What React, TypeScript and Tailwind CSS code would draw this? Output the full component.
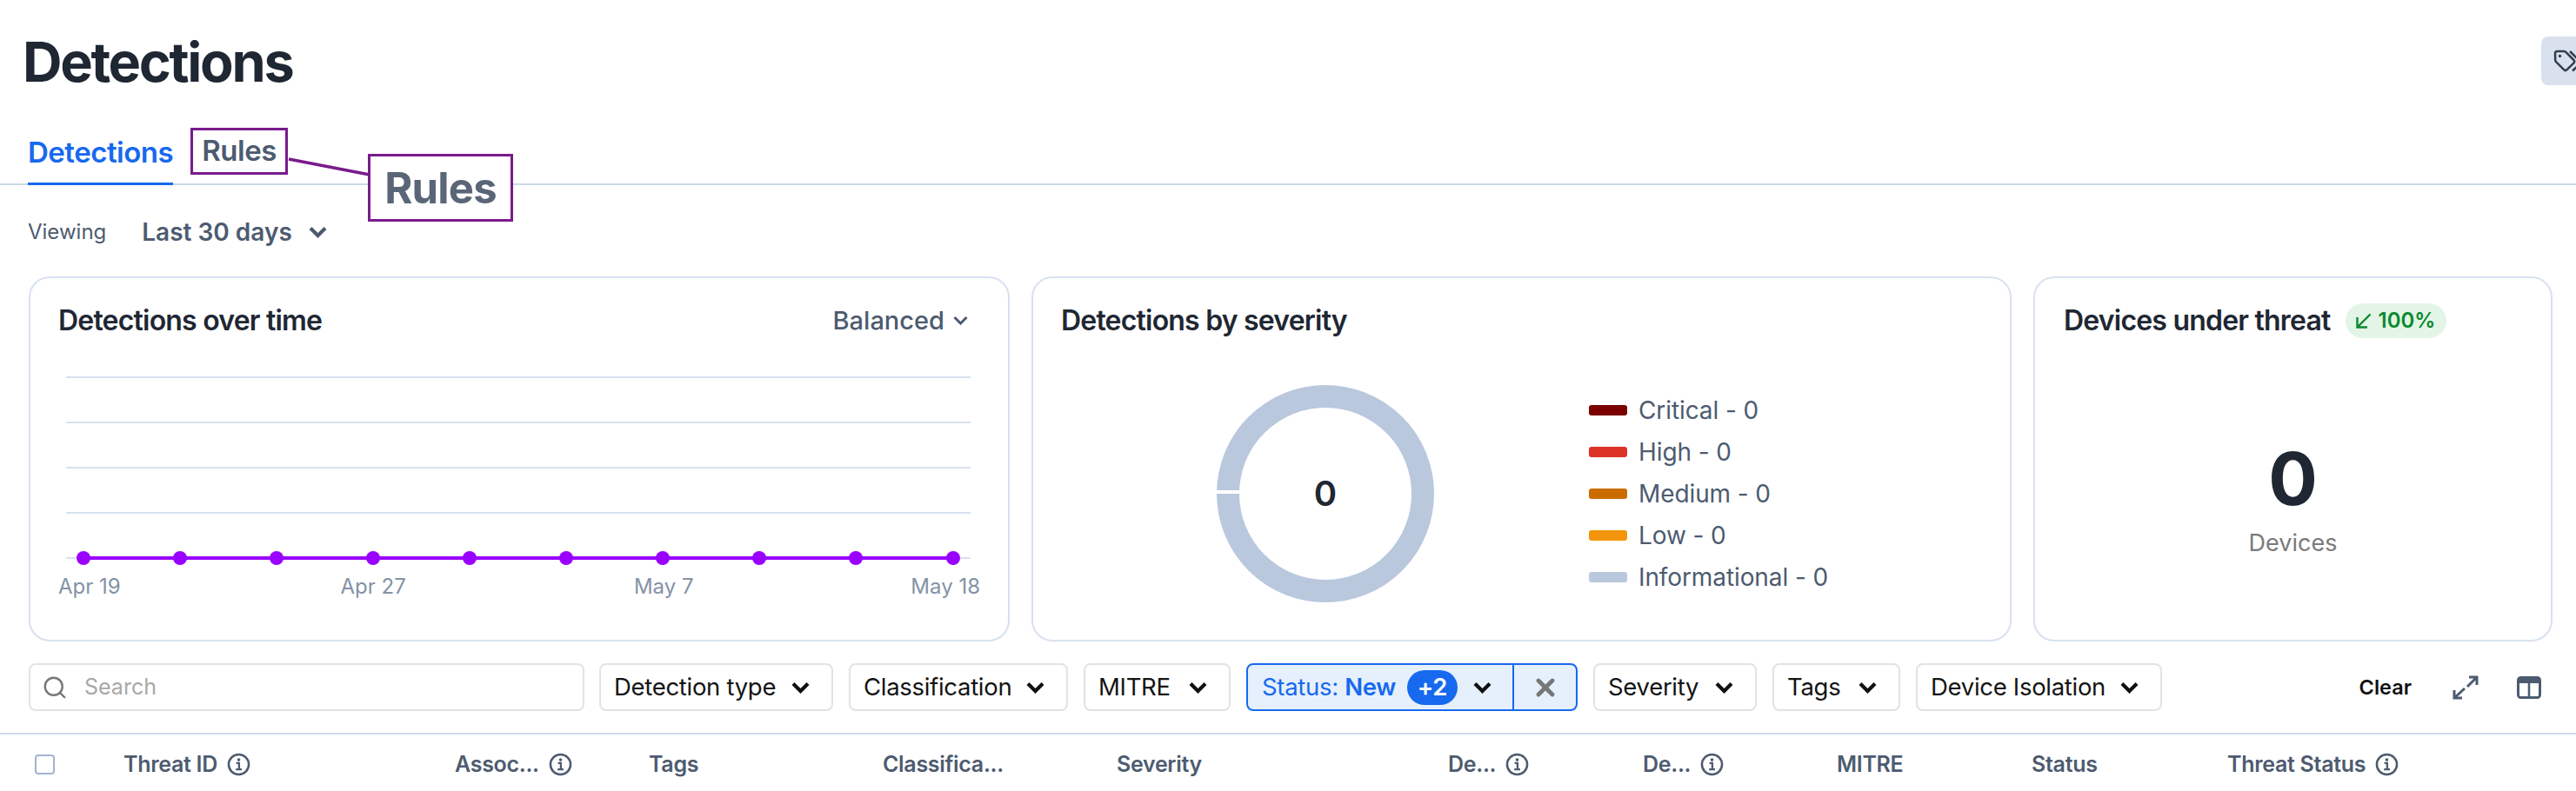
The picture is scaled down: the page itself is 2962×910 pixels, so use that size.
import React from "react";
import { Search, X } from "lucide-react";

const filters = [
  { name: "Detection type", width: "w-[269px]" },
  { name: "Classification", width: "w-[252px]" },
  { name: "MITRE", width: "w-[169px]" },
];
const filtersAfter = [
  { name: "Severity", width: "w-[188px]" },
  { name: "Tags", width: "w-[147px]" },
  { name: "Device Isolation", width: "w-[283px]" },
];
const legend = [
  { name: "Critical - 0", color: "bg-[#7a0000]" },
  { name: "High - 0", color: "bg-[#dc3126]" },
  { name: "Medium - 0", color: "bg-[#cb6c00]" },
  { name: "Low - 0", color: "bg-[#f2950c]" },
  { name: "Informational - 0", color: "bg-[#bac8de]" },
];
const points = [96, 207, 318, 429, 540, 651, 762, 873, 984, 1096];
const columns = [
  { name: "Threat ID", info: true },
  { name: "Assoc...", info: true },
  { name: "Tags" },
  { name: "Classifica..." },
  { name: "Severity" },
  { name: "De...", info: true },
  { name: "De...", info: true },
  { name: "MITRE" },
  { name: "Status" },
  { name: "Threat Status", info: true },
];

const InfoIcon = () => (
  <svg width="27" height="27" viewBox="0 0 28 28" fill="none" className="shrink-0">
    <circle cx="14" cy="14" r="12" stroke="#4d5b70" strokeWidth="2.6" />
    <circle cx="14" cy="8.4" r="1.9" fill="#4d5b70" />
    <path d="M11 12.4h3.4v7.4M10.6 19.8h7" stroke="#4d5b70" strokeWidth="2.4" />
  </svg>
);

const Chevron = ({ className }: { className?: string }) => (
  <svg width="21" height="14" viewBox="0 0 21 14" fill="none" stroke="currentColor" strokeWidth="4.2" className={`shrink-0 ${className ?? ""}`}>
    <path d="M2 2.5l8.5 8.5L19 2.5" />
  </svg>
);

const FilterButton = ({ label, width }: { label: string; width: string }) => (
  <button className={`flex h-[55px] items-center justify-between rounded-lg border-2 border-[#e3e3e3] bg-white pl-[15px] pr-[25px] text-[27.5px] tracking-[-0.3px] text-[#141414] ${width}`}>
    {label}
    <Chevron className="text-[#111]" />
  </button>
);

const Card = ({ className, children }: { className: string; children: React.ReactNode }) => (
  <div className={`h-[420px] rounded-3xl border-2 border-[#d8e1ef] bg-white ${className}`}>{children}</div>
);

export default function App() {
  return (
    <div className="relative h-[910px] w-[2962px] overflow-hidden bg-white font-['Inter',sans-serif]">
      <div className="flex items-start justify-between pl-[26px] pt-[42px]">
        <h1 className="text-[63px] font-bold leading-[58px] tracking-[-2.3px] text-[#1f2733]">Detections</h1>
        <div className="flex h-[56px] w-[80px] shrink-0 -mr-[40px] items-center rounded-lg bg-[#d9e1ee] pl-[14px]">
          <svg width="34" height="26" viewBox="0 0 34 26" fill="none" stroke="#333e4d" strokeWidth="2.5" className="shrink-0">
            <path d="M2 4.5a2.5 2.5 0 0 1 2.5-2.5h7.700a2.500 2.500 0 0 1 1.800.7l9.300 9.300a2.500 2.500 0 0 1 0 3.500l-7.700 7.700a2.500 2.500 0 0 1-3.500 0l-9.300-9.300a2.500 2.500 0 0 1-.6-1.800z" />
            <circle cx="7.500" cy="7.500" r="1.700" fill="#333e4d" stroke="none" />
            <path d="M19 2l11.500 11.500a2 2 0 0 1 0 2.800L22 24.500" />
          </svg>
        </div>
      </div>

      <div className="mt-[45px] flex h-[68px] gap-[20px] border-b-2 border-[#cbd7e7] pl-[32px] text-[33px] font-semibold tracking-[-0.5px]">
        <div className="-mb-[2px] flex h-[68px] items-start border-b-[3px] border-[#1769ee] pt-[6px] text-[#1769ee]">Detections</div>
        <div className="mt-[2px] flex h-[54px] w-[112px] items-center justify-center border-[3.5px] border-[#7a1a8c] text-[#4d5b70]">Rules</div>
      </div>

      {/* callout on top of the tab line */}
      <svg className="absolute left-[330px] top-[180px]" width="96" height="24" viewBox="0 0 96 24">
        <path d="M2 3 L95 21" stroke="#7a1a8c" strokeWidth="3.5" />
      </svg>
      <div className="absolute left-[423px] top-[177px] flex h-[78px] w-[167px] items-center justify-center border-[3.5px] border-[#7a1a8c] bg-white pt-[2px] text-[49px] font-bold tracking-[-0.8px] text-[#5a6678]">
        Rules
      </div>

      <div className="mt-[34px] flex h-[40px] items-center pl-[32px] text-[#4d5b70]">
        <span className="text-[24px]">Viewing</span>
        <span className="ml-[41px] text-[28px] font-semibold">Last 30 days</span>
        <Chevron className="ml-[19px]" />
      </div>

      <div className="mt-[31px] flex gap-[25px] pl-[33px]">
        <Card className="w-[1128px] px-[32px] pt-[26px]">
          <div className="flex items-center justify-between">
            <h2 className="text-[32px] font-semibold leading-[45px] tracking-[-0.8px] text-[#1f2733]">Detections over time</h2>
            <div className="flex items-center gap-[10px] pr-[14px] text-[29px] font-medium text-[#4d5b70]">
              Balanced
              <svg width="17" height="11" viewBox="0 0 17 11" fill="none" stroke="currentColor" strokeWidth="3">
                <path d="M1.500 2l7 7 7-7" />
              </svg>
            </div>
          </div>
          <svg width="1060" height="260" viewBox="67 392 1060 260" className="mt-[1px] block">
            {[434, 486, 538, 590, 642].map((y) => (
              <line key={y} x1="76" x2="1116" y1={y} y2={y} stroke="#d8e1ef" strokeWidth="2" />
            ))}
            <line x1="96" x2="1096" y1="642" y2="642" stroke="#9900ff" strokeWidth="4" />
            {points.map((x) => (
              <circle key={x} cx={x} cy="642" r="8" fill="#9900ff" />
            ))}
          </svg>
          <div className="mt-[5px] flex whitespace-nowrap text-[24px] text-[#8492a6]">
            <span className="w-[325px]">Apr 19</span>
            <span className="w-[338px]">Apr 27</span>
            <span className="w-[319px]">May 7</span>
            <span>May 18</span>
          </div>
        </Card>

        <Card className="w-[1127px] px-[32px] pt-[26px]">
          <h2 className="text-[32px] font-semibold leading-[45px] tracking-[-0.8px] text-[#1f2733]">Detections by severity</h2>
          <div className="mt-[52px] flex items-center">
            <div className="relative ml-[179px] flex h-[250px] w-[250px] items-center justify-center rounded-full border-[26px] border-[#bac8de]">
              <span className="text-[40px] font-semibold text-[#1f2733]">0</span>
              <div className="absolute -left-[26px] top-[95px] h-[4px] w-[26px] bg-white" />
            </div>
            <ul className="ml-[178px] flex flex-col gap-[8px]">
              {legend.map((item) => (
                <li key={item.name} className="flex h-[40px] items-center gap-[13px] text-[28px] tracking-[-0.1px] text-[#4d5b70]">
                  <span className={`h-[12px] w-[44px] rounded-[3px] ${item.color}`} />
                  {item.name}
                </li>
              ))}
            </ul>
          </div>
        </Card>

        <Card className="w-[597px] px-[33px] pt-[26px]">
          <div className="flex items-center gap-[17px]">
            <h2 className="text-[32px] font-semibold leading-[45px] tracking-[-0.8px] text-[#1f2733]">Devices under threat</h2>
            <span className="flex h-[40px] w-[116px] items-center justify-center gap-[8px] rounded-full bg-[#e3f5e6] text-[24px] font-semibold text-[#0a8a2e]">
              <svg width="18" height="18" viewBox="0 0 18 18" fill="none" stroke="currentColor" strokeWidth="2.4">
                <path d="M16.500 1.500 2 16M1.500 5v11.500H13" />
              </svg>
              100%
            </span>
          </div>
          <div className="mt-[118px] flex flex-col items-center">
            <span className="text-[84px] font-bold leading-[84px] text-[#1f2733]">0</span>
            <span className="mt-[12px] text-[27px] text-[#7a7a7a]">Devices</span>
          </div>
        </Card>
      </div>

      <div className="mt-[25px] flex h-[55px] items-center pl-[33px]">
        <div className="flex h-[55px] w-[639px] items-center gap-[19px] rounded-lg border-2 border-[#e3e3e3] pl-[13px] text-[25px] text-[#a8a8a8]">
          <Search size={30} strokeWidth={1.9} className="text-[#777]" />
          Search
        </div>
        <div className="ml-[17px] flex gap-[18px]">
          {filters.map((f) => (
            <FilterButton key={f.name} label={f.name} width={f.width} />
          ))}
          <div className="flex h-[55px] w-[381px] rounded-lg border-2 border-[#1769ee] bg-[#e6f0fc]">
            <div className="flex w-[306px] items-center border-r-2 border-[#1769ee] pl-[16px] text-[27.5px] tracking-[-0.3px] text-[#1769ee]">
              <span>
                Status: <span className="font-semibold">New</span>
              </span>
              <span className="ml-auto flex h-[40px] w-[58px] items-center justify-center rounded-full bg-[#1769ee] font-semibold text-white">+2</span>
              <Chevron className="ml-[18px] mr-[24px] text-[#111]" />
            </div>
            <div className="flex flex-1 items-center justify-center">
              <X size={32} strokeWidth={3.6} className="text-[#777]" />
            </div>
          </div>
          {filtersAfter.map((f) => (
            <FilterButton key={f.name} label={f.name} width={f.width} />
          ))}
        </div>
        <span className="ml-auto text-[23.5px] font-semibold text-[#111]">Clear</span>
        <svg width="30" height="28" viewBox="0 0 30 28" fill="none" stroke="#4d5b70" strokeWidth="3" className="ml-[47px]">
          <path d="M19 2h9v9M28 2 17 13M2 17v9h9M2 26l12-11" />
        </svg>
        <svg width="28" height="26" viewBox="0 0 28 26" className="ml-[44px] mr-[40px]">
          <rect x="1.500" y="1.500" width="25" height="23" rx="3" fill="none" stroke="#4d5b70" strokeWidth="3" />
          <path d="M1 4a3 3 0 0 1 3-3h20a3 3 0 0 1 3 3v4H1z" fill="#4d5b70" />
          <path d="M14 7v18" stroke="#4d5b70" strokeWidth="2.6" />
        </svg>
      </div>

      <div className="mt-[25px] border-t-2 border-[#cdd8e8] pl-[40px] pt-[16px]">
        <div className="grid grid-cols-[102px_381px_223px_269px_269px_381px_224px_223px_224px_225px_auto] items-center text-[25px] font-semibold tracking-[-0.3px] text-[#4d5b70]">
          <div className="h-[23px] w-[23px] rounded-[4px] border-2 border-[#a4b3d0]" />
          {columns.map((col, i) => (
            <div key={i} className="flex items-center gap-[11px]">
              {col.name}
              {col.info && <InfoIcon />}
            </div>
          ))}
        </div>
      </div>
    </div>
  );
}
